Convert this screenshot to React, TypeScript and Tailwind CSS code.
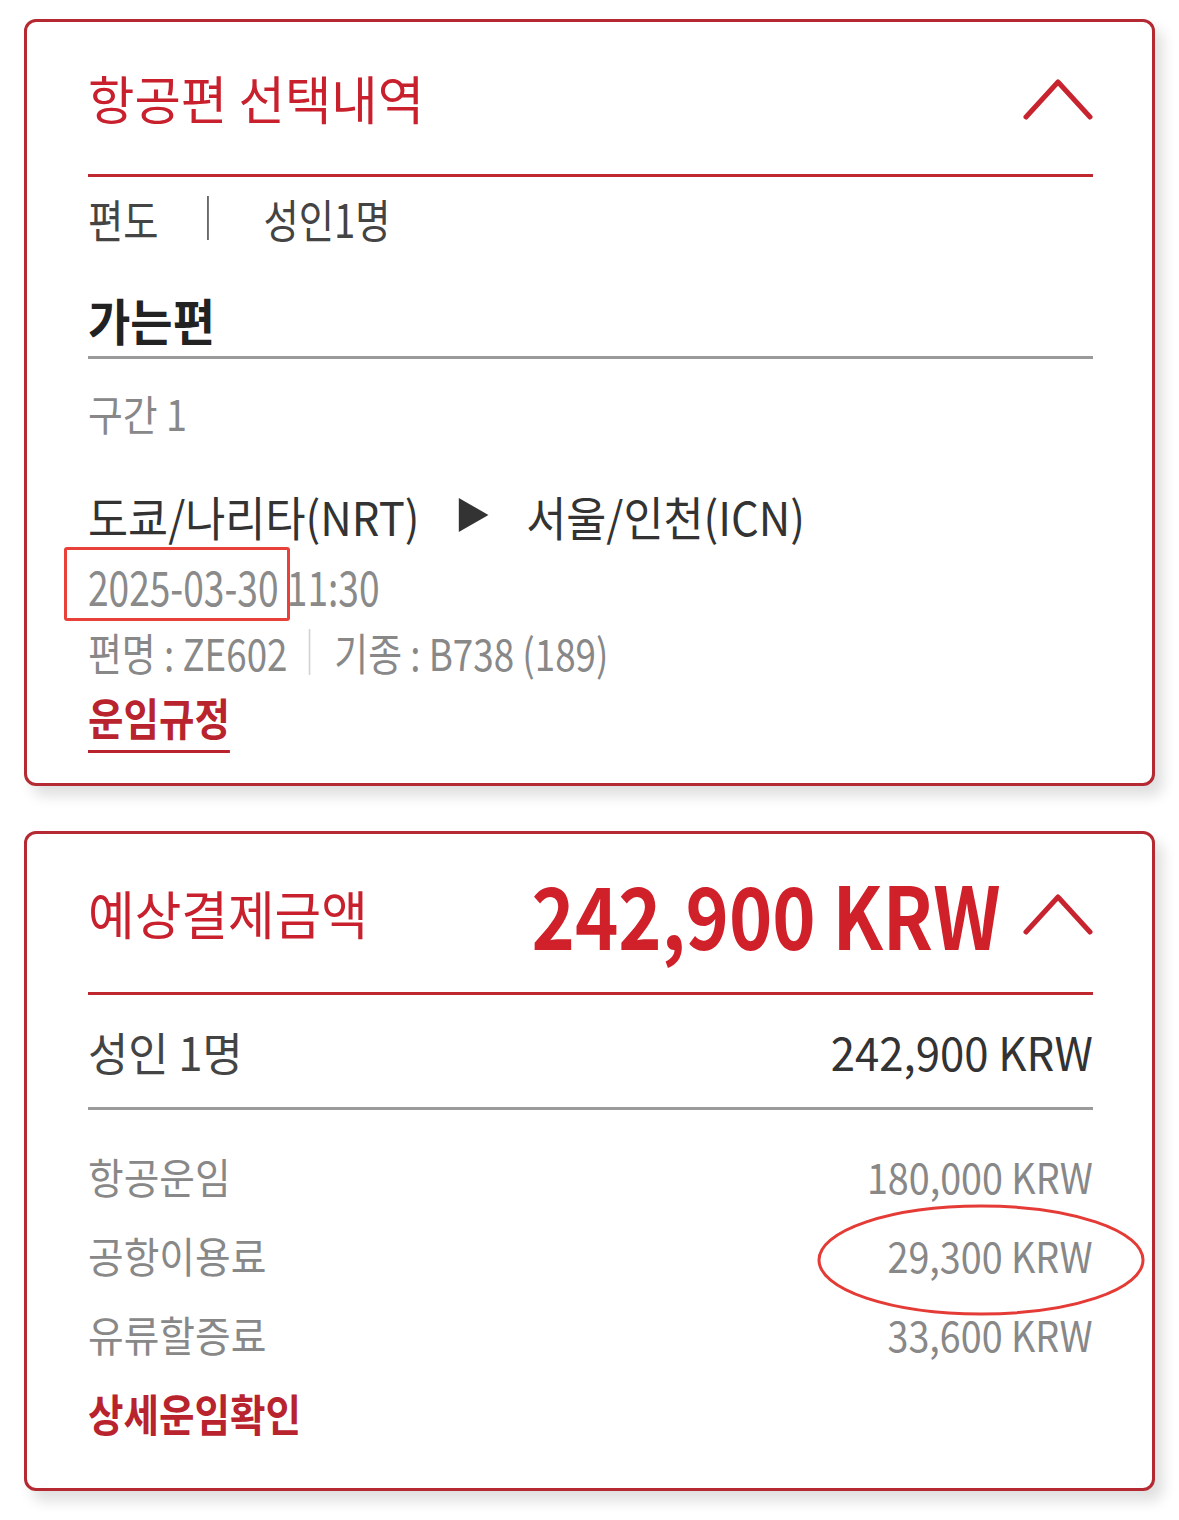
import React from "react";

function Chevron() {
  return (
    <svg width="70" height="44" viewBox="0 0 70 44" className="shrink-0">
      <polyline
        points="3,41 35,6 67,41"
        fill="none"
        stroke="#c8242f"
        strokeWidth="5"
        strokeLinecap="round"
        strokeLinejoin="round"
      />
    </svg>
  );
}

function Row({ label, amount }: { label: string; amount: string }) {
  return (
    <div className="flex h-[79px] items-center justify-between">
      <span className="inline-block origin-left scale-x-[0.923] whitespace-nowrap text-[42px] leading-none text-[#888]">
        {label}
      </span>
      <span className="inline-block origin-right scale-x-[0.897] whitespace-nowrap text-[42px] leading-none text-[#888]">
        {amount}
      </span>
    </div>
  );
}

export default function App() {
  return (
    <div className="relative min-h-screen bg-white pt-[19px] pb-[30px] font-['Noto_Sans_CJK_KR','Noto_Sans',sans-serif]">
      {/* 항공편 선택내역 */}
      <section className="mx-[24px] rounded-[12px] border-[3px] border-[#b52a32] bg-white pl-[61px] pr-[59px] shadow-[8px_10px_14px_rgba(0,0,0,0.13)]">
        <div className="flex h-[152px] items-center justify-between">
          <h2 className="origin-left scale-x-[0.97] whitespace-nowrap text-[52px] font-normal leading-none text-[#c8202c]">
            항공편 선택내역
          </h2>
          <Chevron />
        </div>
        <div className="h-[3px] bg-[#c0282f]" />

        <div className="flex h-[82px] items-center">
          <div className="inline-flex origin-left scale-x-[0.833] items-center whitespace-nowrap text-[46px] leading-none text-[#444]">
            <span>편도</span>
            <span className="ml-[58px] h-[44px] w-[2px] bg-[#555]" />
            <span className="ml-[66px]">성인1명</span>
          </div>
        </div>

        <div className="flex h-[97px] items-end pb-[12px]">
          <h3 className="origin-left scale-x-[0.92] whitespace-nowrap text-[50px] font-bold leading-none text-[#222]">
            가는편
          </h3>
        </div>
        <div className="h-[3px] bg-[#9a9a9a]" />

        <div className="flex h-[108px] items-center">
          <span className="inline-block origin-left scale-x-[0.9] whitespace-nowrap text-[42px] leading-none text-[#888]">
            구간 1
          </span>
        </div>

        <div className="flex h-[96px] items-center">
          <div className="inline-flex origin-left scale-x-[0.927] items-center whitespace-nowrap text-[47px] leading-none text-[#333]">
            <span>도쿄/나리타(NRT)</span>
            <svg width="36" height="36" viewBox="0 0 36 36" className="ml-[40px]">
              <polygon points="2,1 34,18 2,35" fill="#333" />
            </svg>
            <span className="ml-[39px]">서울/인천(ICN)</span>
          </div>
        </div>

        <div className="flex h-[44px] items-center">
          <span className="inline-block origin-left scale-x-[0.773] whitespace-nowrap text-[48px] leading-none text-[#8a8a8a]">
            2025-03-30 11:30
          </span>
        </div>

        <div className="flex h-[90px] items-center">
          <div className="inline-flex origin-left scale-x-[0.836] items-center whitespace-nowrap text-[44px] leading-none text-[#888]">
            <span>편명 : ZE602</span>
            <span className="ml-[25px] h-[46px] w-[2px] bg-[#d4d4d4]" />
            <span className="ml-[29px]">기종 : B738 (189)</span>
          </div>
        </div>

        <div className="pb-[30px]">
          <a className="inline-block origin-left scale-x-[0.876] whitespace-nowrap border-b-[3px] border-[#b8232e] pb-[13px] text-[44px] font-bold leading-[40px] text-[#b8232e]">
            운임규정
          </a>
        </div>
      </section>

      {/* 예상결제금액 */}
      <section className="mx-[24px] mt-[45px] rounded-[12px] border-[3px] border-[#b52a32] bg-white pl-[61px] pr-[59px] shadow-[8px_10px_14px_rgba(0,0,0,0.13)]">
        <div className="flex h-[158px] items-center justify-between">
          <h2 className="origin-left scale-x-[0.975] whitespace-nowrap text-[52px] font-normal leading-none text-[#c8202c]">
            예상결제금액
          </h2>
          <div className="flex items-center">
            <span className="inline-block origin-right scale-x-[0.855] whitespace-nowrap text-[86px] font-bold leading-none text-[#d0202a]">
              242,900 KRW
            </span>
            <span className="ml-[22px]">
              <Chevron />
            </span>
          </div>
        </div>
        <div className="h-[3px] bg-[#c0282f]" />

        <div className="flex h-[112px] items-center justify-between">
          <span className="inline-block origin-left scale-x-[0.95] whitespace-nowrap text-[46px] leading-none text-[#444]">
            성인 1명
          </span>
          <span className="inline-block origin-right scale-x-[0.95] whitespace-nowrap text-[46px] leading-none text-[#333]">
            242,900 KRW
          </span>
        </div>
        <div className="h-[3px] bg-[#9a9a9a]" />

        <div className="pt-[26px] pb-[36px]">
          <Row label="항공운임" amount="180,000 KRW" />
          <Row label="공항이용료" amount="29,300 KRW" />
          <Row label="유류할증료" amount="33,600 KRW" />
          <div className="flex h-[79px] items-center">
            <a className="inline-block origin-left scale-x-[0.877] whitespace-nowrap text-[44px] font-bold leading-none text-[#b8232e]">
              상세운임확인
            </a>
          </div>
        </div>
      </section>

      {/* markup annotations */}
      <div className="pointer-events-none absolute left-[64px] top-[547px] h-[74px] w-[226px] rounded-[3px] border-[3px] border-[#e8413a]" />
      <svg
        className="pointer-events-none absolute left-[816px] top-[1203px]"
        width="330"
        height="114"
        viewBox="0 0 330 114"
      >
        <ellipse cx="165" cy="57" rx="162" ry="54" fill="none" stroke="#e53b36" strokeWidth="3" />
      </svg>
    </div>
  );
}
